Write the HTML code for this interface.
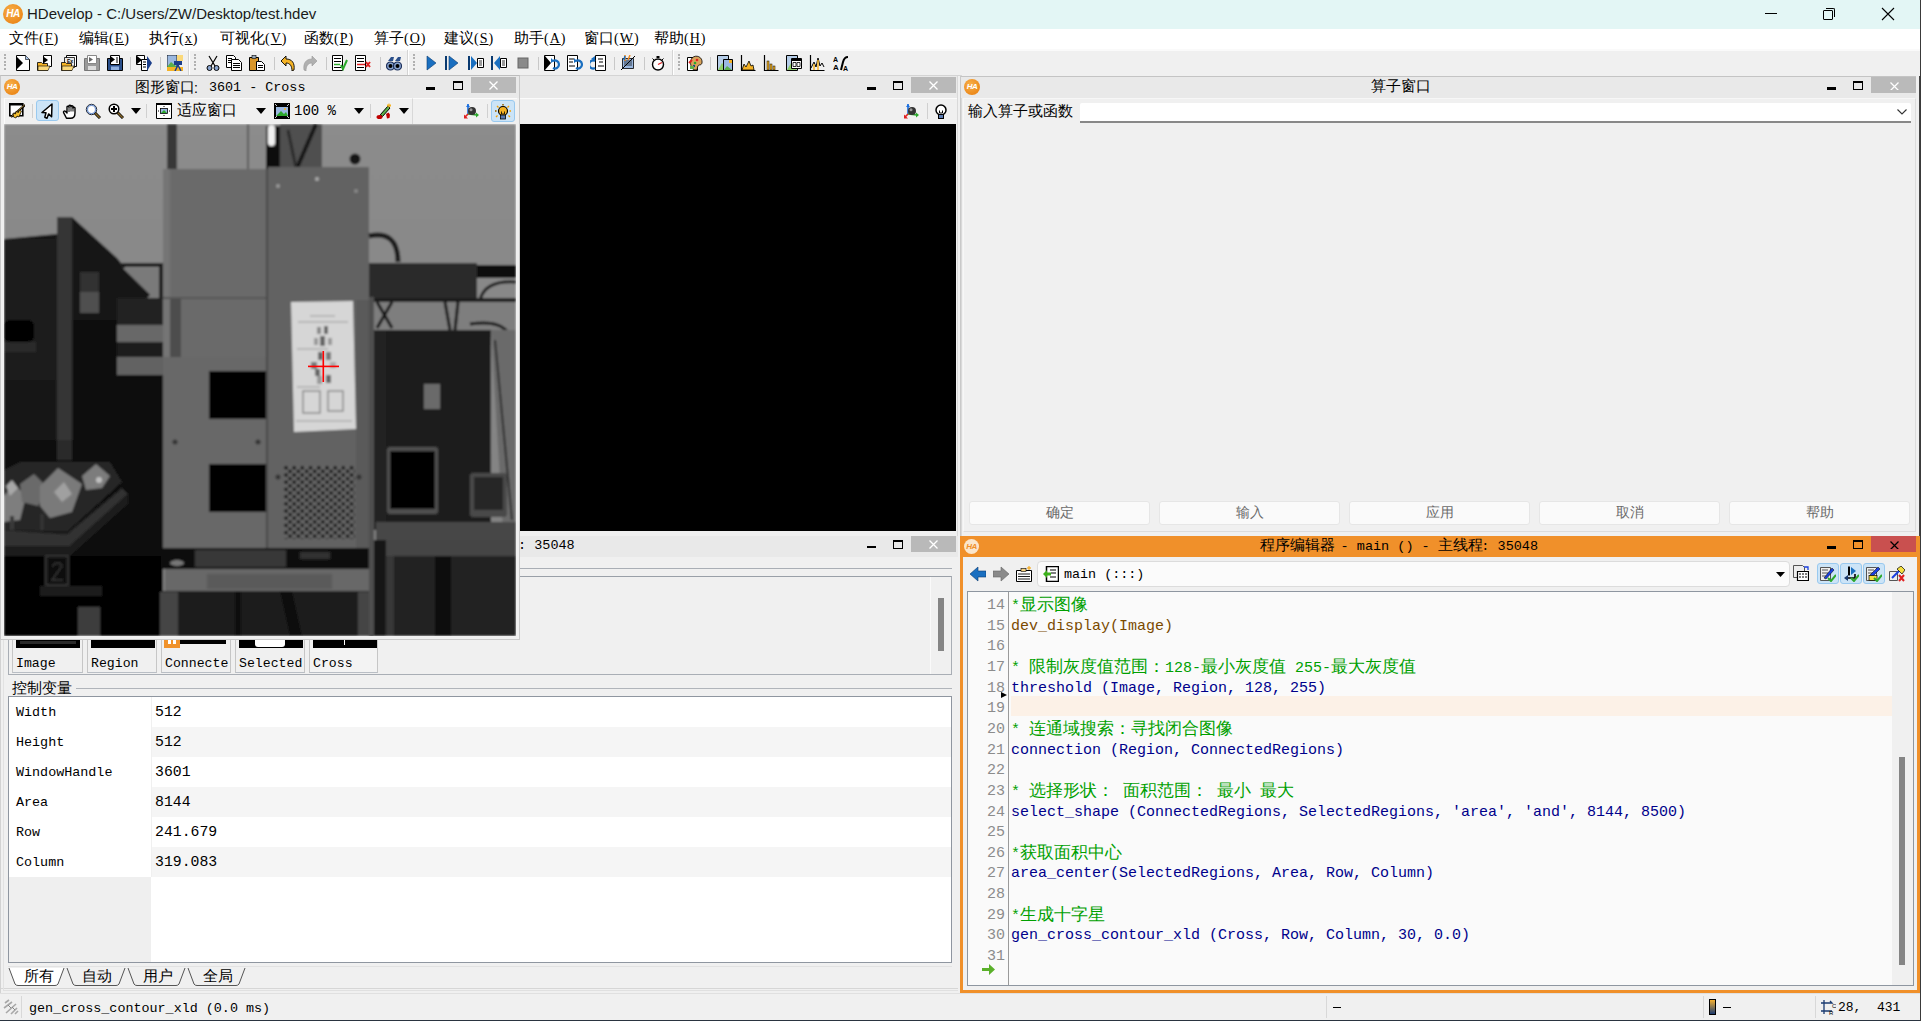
<!DOCTYPE html>
<html><head><meta charset="utf-8">
<style>
*{box-sizing:border-box;margin:0;padding:0}
html,body{width:1921px;height:1021px;overflow:hidden;background:#f0f0f0;font-family:"Liberation Sans",sans-serif;color:#000}
.a{position:absolute}
.mono{font-family:"Liberation Mono",monospace}
.ha{position:absolute;width:17px;height:17px;border-radius:50%;background:radial-gradient(circle at 40% 35%,#f7b04a,#ec8a1c 70%);color:#fff;font:italic bold 8px/17px "Liberation Sans",sans-serif;text-align:center;letter-spacing:-0.5px}
.tb{position:absolute;background:#e9e9e9}
.minb{position:absolute;width:11px;height:3px;background:#000}
.maxb{position:absolute;width:13px;height:11px;border:2px solid #000;border-top-width:3px}
.clsb{position:absolute;width:45px;height:16px;background:#b9b9b9;color:#fff;font:15px/16px "Liberation Sans",sans-serif;text-align:center}
.menu{top:29px;font-size:15px;line-height:18px;white-space:nowrap;color:#000}
.ln{left:968px;width:37px;text-align:right;font-size:15px;line-height:18px;color:#8c8c8c}
.code{left:1011px;font-size:15px;line-height:18px;white-space:pre}
.cj{font-size:17px;line-height:17px;display:inline-block;white-space:nowrap}
.mcj{display:inline-block;white-space:nowrap}
.acc{font-family:"Liberation Serif",serif;font-size:14px;letter-spacing:1px}
.acc u{text-underline-offset:1px}
.cjk{font-family:"Liberation Sans",sans-serif}
</style></head><body>

<!-- ===== Title bar ===== -->
<div class="a" style="left:0;top:0;width:1921px;height:29px;background:#e3f6f5"></div>
<div class="ha" style="left:3px;top:4px;width:20px;height:20px;line-height:20px;font-size:10px">HA</div>
<div class="a" style="left:27px;top:5px;font-size:15px;color:#1a1a1a;white-space:nowrap">HDevelop - C:/Users/ZW/Desktop/test.hdev</div>

<div class="a" style="left:1765px;top:13px;width:12px;height:1px;background:#000"></div>
<div class="a" style="left:1823px;top:10px;width:10px;height:10px;border:1px solid #000;border-radius:1px"></div>
<div class="a" style="left:1826px;top:8px;width:9px;height:9px;border-top:1px solid #000;border-right:1px solid #000;border-radius:0 2px 0 0"></div>
<svg class="a" style="left:1881px;top:7px" width="14" height="14" viewBox="0 0 14 14"><path d="M1 1l12 12M13 1L1 13" stroke="#000" stroke-width="1.1"/></svg>
<!-- ===== Menu bar ===== -->
<div class="a" style="left:0;top:29px;width:1921px;height:20px;background:#fff"></div>
<div class="a menu" style="left:9px"><span class="mcj" style="width:30px">文件</span><span class="acc">(<u>F</u>)</span></div>
<div class="a menu" style="left:79px"><span class="mcj" style="width:30px">编辑</span><span class="acc">(<u>E</u>)</span></div>
<div class="a menu" style="left:149px"><span class="mcj" style="width:30px">执行</span><span class="acc">(<u>x</u>)</span></div>
<div class="a menu" style="left:220px"><span class="mcj" style="width:45px">可视化</span><span class="acc">(<u>V</u>)</span></div>
<div class="a menu" style="left:304px"><span class="mcj" style="width:30px">函数</span><span class="acc">(<u>P</u>)</span></div>
<div class="a menu" style="left:374px"><span class="mcj" style="width:30px">算子</span><span class="acc">(<u>O</u>)</span></div>
<div class="a menu" style="left:444px"><span class="mcj" style="width:30px">建议</span><span class="acc">(<u>S</u>)</span></div>
<div class="a menu" style="left:514px"><span class="mcj" style="width:30px">助手</span><span class="acc">(<u>A</u>)</span></div>
<div class="a menu" style="left:584px"><span class="mcj" style="width:30px">窗口</span><span class="acc">(<u>W</u>)</span></div>
<div class="a menu" style="left:654px"><span class="mcj" style="width:30px">帮助</span><span class="acc">(<u>H</u>)</span></div>

<!-- ===== Toolbar ===== -->
<div class="a" style="left:0;top:49px;width:1921px;height:27px;background:#f0f0f0;border-top:2px solid #fafafa;border-bottom:1px solid #d4d4d4"></div>
<svg class="a" style="left:15px;top:55px" width="16" height="16" viewBox="0 0 16 16"><path d="M1.5 .5h9l4 4v11h-13z" fill="#fff" stroke="#000"/><path d="M10.5 .5v4h4" fill="#a9c4e8" stroke="#000" stroke-width=".6"/><path d="M2 2l6 6-6 6z" fill="#000"/></svg>
<svg class="a" style="left:37px;top:55px" width="16" height="16" viewBox="0 0 16 16"><path d="M6.5 .5h8v11h-8z" fill="#fff" stroke="#000"/><path d="M7 2l4 3-4 3z" fill="#000"/><path d="M.5 7.5h4l1 1h5v7h-10z" fill="#f5b325" stroke="#000" stroke-width=".8"/><path d="M1 11h12l-2 4.5h-10z" fill="#fbd97a" stroke="#000" stroke-width=".6"/></svg>
<svg class="a" style="left:61px;top:55px" width="16" height="16" viewBox="0 0 16 16"><path d="M5.5 .5h10v11h-10z" fill="#fff" stroke="#000"/><path d="M3.5 2.5h10v10h-10z" fill="#e8e8e8" stroke="#000" stroke-width=".8"/><text x="6" y="8" font-size="5" font-family="Liberation Sans" font-weight="bold">Ex</text><path d="M.5 7.5h4l1 1h5v7h-10z" fill="#f5b325" stroke="#000" stroke-width=".8"/><path d="M1 11h12l-2 4.5h-10z" fill="#fbd97a" stroke="#000" stroke-width=".6"/></svg>
<svg class="a" style="left:84px;top:55px" width="16" height="16" viewBox="0 0 16 16"><path d="M.5 3.5h15v12h-15z" fill="#9a9a9a" stroke="#777"/><path d="M3.5 .5h9v8h-9z" fill="#fff" stroke="#888"/><path d="M5 2l4 2.5-4 2.5z" fill="#666"/><rect x="4" y="11" width="8" height="4" fill="#ddd"/></svg>
<svg class="a" style="left:107px;top:55px" width="16" height="16" viewBox="0 0 16 16"><path d="M.5 3.5h15v12h-15z" fill="#2b4f8a" stroke="#000"/><path d="M3.5 .5h9v9h-9z" fill="#fff" stroke="#000"/><path d="M4 1.5l4 3-4 3z" fill="#000"/><path d="M10 2v6" stroke="#000"/><rect x="4" y="11.5" width="8" height="3.5" fill="#8fb0e0"/></svg>
<svg class="a" style="left:136px;top:55px" width="16" height="16" viewBox="0 0 16 16"><path d="M.5 .5h8v9h-8z" fill="#fff" stroke="#000"/><path d="M1 1l5 4-5 4z" fill="#000"/><path d="M5.5 4.5h6v11h-6z" fill="#fff" stroke="#000"/><path d="M7 7h3M7 9.5h3M7 12h3" stroke="#000"/><path d="M11 1l5 7-5 8z" fill="#1c3f8a"/></svg>
<svg class="a" style="left:167px;top:55px" width="16" height="16" viewBox="0 0 16 16"><rect x="0" y="0" width="10" height="12" fill="#9bb8e0" stroke="#000" stroke-width=".8"/><path d="M0 12l4-5 6 5z" fill="#5bb04a"/><rect x="0" y="12" width="16" height="4" fill="#f5b325"/><rect x="10" y="0" width="6" height="6" fill="#fbd97a"/><rect x="7" y="6" width="8" height="4" fill="#1c3f8a"/><path d="M11 10l-3 6M11 10l3 6" stroke="#1c3f8a" stroke-width="1.5"/></svg>
<svg class="a" style="left:205px;top:55px" width="16" height="16" viewBox="0 0 16 16"><path d="M4 1l6 10M12 1l-6 10" stroke="#000" stroke-width="1.2"/><circle cx="4.5" cy="13" r="2.5" fill="#8aa5d0" stroke="#000"/><circle cx="11.5" cy="13" r="2.5" fill="#8aa5d0" stroke="#000"/></svg>
<svg class="a" style="left:226px;top:55px" width="16" height="16" viewBox="0 0 16 16"><path d="M.5 .5h7l2 2v10h-9z" fill="#fff" stroke="#000"/><path d="M2 3.5h4M2 5.5h4M2 7.5h4" stroke="#000"/><path d="M5.5 4.5h7l3 3v8h-10z" fill="#fff" stroke="#000"/><path d="M7 8.5h7M7 10.5h7M7 12.5h7" stroke="#000"/></svg>
<svg class="a" style="left:249px;top:55px" width="16" height="16" viewBox="0 0 16 16"><path d="M.5 2.5h9v13h-9z" fill="#d9962a" stroke="#000"/><rect x="3" y="0.5" width="4" height="3" fill="#9ab" stroke="#000" stroke-width=".6"/><path d="M7.5 6.5h5l3 3v6h-8z" fill="#fff" stroke="#000"/><path d="M9 10.5h5M9 12.5h5" stroke="#000"/></svg>
<svg class="a" style="left:280px;top:55px" width="16" height="16" viewBox="0 0 16 16"><path d="M1 6l5-5v3c6 0 9 4 8 11l-2 1c0-5-2-8-6-8v3z" fill="#f5b325" stroke="#000" stroke-width=".9"/></svg>
<svg class="a" style="left:302px;top:55px" width="16" height="16" viewBox="0 0 16 16"><path d="M15 6l-5-5v3c-6 0-9 4-8 11l2 1c0-5 2-8 6-8v3z" fill="#b0b0b0" stroke="#999" stroke-width=".6"/></svg>
<svg class="a" style="left:332px;top:55px" width="16" height="16" viewBox="0 0 16 16"><path d="M.5 .5h10v15h-10z" fill="#fff" stroke="#000"/><path d="M2 3.5h7M2 6.5h7M2 12.5h7" stroke="#000"/><path d="M2 9.5h6" stroke="#2ca82c" stroke-width="1.5"/><path d="M9 10l2 4 4-9" stroke="#2ca82c" stroke-width="2" fill="none"/></svg>
<svg class="a" style="left:355px;top:55px" width="16" height="16" viewBox="0 0 16 16"><path d="M.5 .5h10v15h-10z" fill="#fff" stroke="#000"/><path d="M2 3.5h7M2 6.5h7M2 12.5h7" stroke="#000"/><path d="M2 9.5h8" stroke="#e02020" stroke-width="1.5"/><path d="M11 7l4 5M15 7l-4 5" stroke="#e02020" stroke-width="2"/></svg>
<svg class="a" style="left:386px;top:55px" width="16" height="16" viewBox="0 0 16 16"><path d="M2 6l3-4h3l-1 4M9 6l3-4h3l-1 4" fill="#2b4f8a"/><circle cx="4.5" cy="11" r="4" fill="#8aa5d0" stroke="#1c2f5a" stroke-width="1.2"/><circle cx="11.5" cy="11" r="4" fill="#8aa5d0" stroke="#1c2f5a" stroke-width="1.2"/><circle cx="4.5" cy="11" r="2" fill="#000"/><circle cx="11.5" cy="11" r="2" fill="#000"/></svg>
<svg class="a" style="left:424px;top:55px" width="16" height="16" viewBox="0 0 16 16"><path d="M3 1l9 7-9 7z" fill="#1a6fc0" stroke="#0a3a70" stroke-width=".6"/></svg>
<svg class="a" style="left:444px;top:55px" width="16" height="16" viewBox="0 0 16 16"><rect x="1" y="1" width="2" height="14" fill="#0a3a70"/><path d="M5 1l9 7-9 7z" fill="#1a6fc0" stroke="#0a3a70" stroke-width=".6"/></svg>
<svg class="a" style="left:468px;top:55px" width="16" height="16" viewBox="0 0 16 16"><rect x="0" y="1" width="2" height="14" fill="#0a3a70"/><path d="M3 1l6 7-6 7z" fill="#1a6fc0"/><path d="M9.5 3.5h6v9h-6z" fill="#fff" stroke="#000"/><path d="M11 6h3M11 8h3M11 10h3" stroke="#000" stroke-width=".8"/></svg>
<svg class="a" style="left:491px;top:55px" width="16" height="16" viewBox="0 0 16 16"><rect x="0" y="1" width="2" height="14" fill="#0a3a70"/><path d="M9 1l-6 7 6 7z" fill="#1a6fc0"/><path d="M9.5 3.5h6v9h-6z" fill="#fff" stroke="#000"/><path d="M11 6h3M11 8h3M11 10h3" stroke="#000" stroke-width=".8"/></svg>
<svg class="a" style="left:515px;top:55px" width="16" height="16" viewBox="0 0 16 16"><rect x="3" y="3" width="10" height="10" fill="#8a8a8a" stroke="#666"/></svg>
<svg class="a" style="left:544px;top:55px" width="16" height="16" viewBox="0 0 16 16"><path d="M.5 .5h10v15h-10z" fill="#fff" stroke="#000"/><path d="M1 1l6 7-6 7z" fill="#000"/><path d="M9 6a4 4 0 1 1 0 7" stroke="#1a6fc0" stroke-width="2.2" fill="none"/><path d="M7 3l3 3-3 2z" fill="#1a6fc0"/></svg>
<svg class="a" style="left:567px;top:55px" width="16" height="16" viewBox="0 0 16 16"><path d="M.5 .5h10v15h-10z" fill="#fff" stroke="#000"/><path d="M2 4h5M2 7h4M2 11h6" stroke="#000"/><path d="M9 6a4 4 0 1 1 0 7" stroke="#1a6fc0" stroke-width="2.2" fill="none"/><path d="M7 3l3 3-3 2z" fill="#1a6fc0"/></svg>
<svg class="a" style="left:590px;top:55px" width="16" height="16" viewBox="0 0 16 16"><path d="M5.5 .5h10v15h-10z" fill="#fff" stroke="#000"/><path d="M8 4h5M9 7h4M8 11h6" stroke="#000"/><path d="M5 6a4 4 0 1 0 0 7" stroke="#1a6fc0" stroke-width="2.2" fill="none"/><path d="M1 4l4-3v5z" fill="#1a6fc0"/></svg>
<svg class="a" style="left:620px;top:55px" width="16" height="16" viewBox="0 0 16 16"><path d="M2.5 3.5h11v10h-11z" fill="#9bb8e0" stroke="#000" stroke-width=".8"/><path d="M4 6h8M4 8h8M4 10h8" stroke="#000" stroke-width=".7"/><path d="M1 15l14-14" stroke="#000"/><path d="M5 0v6M10 0l-2 5" stroke="#f08a20" stroke-width="1.5"/><path d="M5 1l-1 4" stroke="#1a6fc0" stroke-width="1.5"/></svg>
<svg class="a" style="left:650px;top:55px" width="16" height="16" viewBox="0 0 16 16"><circle cx="8" cy="9.5" r="5.5" fill="#fff" stroke="#000" stroke-width="1.4"/><rect x="6.5" y="1" width="3" height="2" fill="#000"/><path d="M8 9.5l4-2" stroke="#e02020" stroke-width="1.3"/><path d="M2.5 3.5l2 2M13.5 3.5l-2 2" stroke="#000"/></svg>
<svg class="a" style="left:687px;top:55px" width="16" height="16" viewBox="0 0 16 16"><path d="M.5 2.5h10v13h-10z" fill="#fff" stroke="#000"/><path d="M5 3c4-4 11-1 10 5-1 3-3 1-4 3s0 4-3 4c-4 0-6-8-3-12z" fill="#d9a35a" stroke="#000" stroke-width=".8"/><circle cx="10" cy="5" r="1.3" fill="#e02020"/><circle cx="8" cy="8" r="1.3" fill="#2ca82c"/><circle cx="7" cy="11" r="1.2" fill="#1c3f8a"/><path d="M2 8l3-3" stroke="#e02020" stroke-width="2"/><rect x="3" y="11" width="4" height="3" fill="#5bb04a"/></svg>
<svg class="a" style="left:717px;top:55px" width="16" height="16" viewBox="0 0 16 16"><path d="M.5 .5h11v15h-11z" fill="#b5cde8" stroke="#000"/><path d="M1 15l4-7 6 7z" fill="#8fcf6a"/><path d="M6.5 4.5h9v11h-9z" fill="#9bb8e0" stroke="#000"/><rect x="12" y="5" width="3" height="3" fill="#f5b325"/><path d="M7 15l3-4 5 4z" fill="#5bb04a"/></svg>
<svg class="a" style="left:740px;top:55px" width="16" height="16" viewBox="0 0 16 16"><path d="M1.5 0v15.5h14" stroke="#000" stroke-width="1.2" fill="none"/><path d="M2 15l2-6 2 3 3-6 2 5 2-1 1 5z" fill="#f5b325" stroke="#000" stroke-width=".8"/></svg>
<svg class="a" style="left:763px;top:55px" width="16" height="16" viewBox="0 0 16 16"><path d="M1.5 0v15.5h14" stroke="#000" stroke-width="1.2" fill="none"/><rect x="4" y="6" width="2" height="9" fill="#f5b325" stroke="#000" stroke-width=".5"/><rect x="7" y="9" width="2" height="6" fill="#f5b325" stroke="#000" stroke-width=".5"/><rect x="10" y="11" width="2" height="4" fill="#f5b325" stroke="#000" stroke-width=".5"/></svg>
<svg class="a" style="left:786px;top:55px" width="16" height="16" viewBox="0 0 16 16"><path d="M.5 .5h11v15h-11z" fill="#b5cde8" stroke="#000"/><path d="M1 15l4-7 6 7z" fill="#8fcf6a"/><path d="M5.5 3.5h10v10h-10z" fill="#fff" stroke="#000"/><rect x="6" y="4" width="9" height="2" fill="#000"/><path d="M7 7.5h3v4h-3zM11 7.5h3v4h-3z" fill="none" stroke="#000" stroke-width=".8"/></svg>
<svg class="a" style="left:809px;top:55px" width="16" height="16" viewBox="0 0 16 16"><path d="M1.5 0v15.5h14" stroke="#000" stroke-width="1.2" fill="none"/><path d="M2 13l3-6 2 5 2-9 2 8 2-3 2 4" stroke="#000" stroke-width="1" fill="none"/><path d="M5 9v6M9 5v10" stroke="#f5b325" stroke-width="1.5"/></svg>
<svg class="a" style="left:833px;top:55px" width="16" height="16" viewBox="0 0 16 16"><text x="0" y="7" font-size="7" font-weight="bold" font-family="Liberation Sans">A</text><text x="0" y="15" font-size="8" font-weight="bold" font-family="Liberation Sans">A</text><path d="M8 15l2-8c1-4 3-5 5-5" stroke="#000" stroke-width="2" fill="none"/><text x="10" y="15.5" font-size="7" font-weight="bold" font-family="Liberation Sans">A</text></svg>
<div class="a" style="left:130px;top:57px;width:1px;height:13px;background:#c8c8c8"></div>
<div class="a" style="left:160px;top:57px;width:1px;height:13px;background:#c8c8c8"></div>
<div class="a" style="left:274px;top:57px;width:1px;height:13px;background:#c8c8c8"></div>
<div class="a" style="left:326px;top:57px;width:1px;height:13px;background:#c8c8c8"></div>
<div class="a" style="left:380px;top:57px;width:1px;height:13px;background:#c8c8c8"></div>
<div class="a" style="left:538px;top:57px;width:1px;height:13px;background:#c8c8c8"></div>
<div class="a" style="left:614px;top:57px;width:1px;height:13px;background:#c8c8c8"></div>
<div class="a" style="left:644px;top:57px;width:1px;height:13px;background:#c8c8c8"></div>
<div class="a" style="left:710px;top:57px;width:1px;height:13px;background:#c8c8c8"></div>
<div class="a" style="left:188px;top:50px;width:1px;height:25px;background:#d4d4d4"></div><div class="a" style="left:189px;top:50px;width:1px;height:25px;background:#fff"></div>
<div class="a" style="left:407px;top:50px;width:1px;height:25px;background:#d4d4d4"></div><div class="a" style="left:408px;top:50px;width:1px;height:25px;background:#fff"></div>
<div class="a" style="left:672px;top:50px;width:1px;height:25px;background:#d4d4d4"></div><div class="a" style="left:673px;top:50px;width:1px;height:25px;background:#fff"></div>
<div class="a" style="left:4px;top:54.0px;width:2px;height:2px;background:#b0b0b0"></div><div class="a" style="left:4px;top:57.4px;width:2px;height:2px;background:#b0b0b0"></div><div class="a" style="left:4px;top:60.8px;width:2px;height:2px;background:#b0b0b0"></div><div class="a" style="left:4px;top:64.2px;width:2px;height:2px;background:#b0b0b0"></div><div class="a" style="left:4px;top:67.6px;width:2px;height:2px;background:#b0b0b0"></div>
<div class="a" style="left:194px;top:54.0px;width:2px;height:2px;background:#b0b0b0"></div><div class="a" style="left:194px;top:57.4px;width:2px;height:2px;background:#b0b0b0"></div><div class="a" style="left:194px;top:60.8px;width:2px;height:2px;background:#b0b0b0"></div><div class="a" style="left:194px;top:64.2px;width:2px;height:2px;background:#b0b0b0"></div><div class="a" style="left:194px;top:67.6px;width:2px;height:2px;background:#b0b0b0"></div>
<div class="a" style="left:413px;top:54.0px;width:2px;height:2px;background:#b0b0b0"></div><div class="a" style="left:413px;top:57.4px;width:2px;height:2px;background:#b0b0b0"></div><div class="a" style="left:413px;top:60.8px;width:2px;height:2px;background:#b0b0b0"></div><div class="a" style="left:413px;top:64.2px;width:2px;height:2px;background:#b0b0b0"></div><div class="a" style="left:413px;top:67.6px;width:2px;height:2px;background:#b0b0b0"></div>
<div class="a" style="left:678px;top:54.0px;width:2px;height:2px;background:#b0b0b0"></div><div class="a" style="left:678px;top:57.4px;width:2px;height:2px;background:#b0b0b0"></div><div class="a" style="left:678px;top:60.8px;width:2px;height:2px;background:#b0b0b0"></div><div class="a" style="left:678px;top:64.2px;width:2px;height:2px;background:#b0b0b0"></div><div class="a" style="left:678px;top:67.6px;width:2px;height:2px;background:#b0b0b0"></div>


<!-- ===== Back graphics window ===== -->
<div class="a" style="left:0;top:76px;width:958px;height:460px;background:#f0f0f0"></div>
<div class="tb" style="left:0;top:76px;width:958px;height:22px"></div>
<div class="a" style="left:520px;top:124px;width:436px;height:407px;background:#000"></div>

<!-- ===== Variable window ===== -->
<div class="a" style="left:0;top:536px;width:958px;height:456px;background:#f0f0f0"></div>
<div class="tb" style="left:0;top:536px;width:958px;height:21px"></div>
<div class="a mono" style="left:518px;top:538px;font-size:13.5px;line-height:16px;white-space:pre">: 35048</div>
<div class="minb" style="left:867px;top:546px;width:9px;height:2px"></div>
<div class="a" style="left:893px;top:540px;width:10px;height:9px;border:1px solid #000;border-top-width:2.5px"></div>
<div class="a" style="left:911px;top:536px;width:45px;height:16px;background:#b9b9b9"></div>
<svg class="a" style="left:929px;top:540px" width="9" height="9" viewBox="0 0 9 9"><path d="M.5 .5l8 8M8.5 .5l-8 8" stroke="#fff" stroke-width="1.3"/></svg>
<div class="a" style="left:8px;top:568px;width:944px;height:1px;background:#a9aeb5"></div>
<div class="a" style="left:8px;top:576px;width:944px;height:99px;border:1px solid #a9aeb5;border-top-color:#9aa0a8;background:#f0f0f0"></div>
<div class="a" style="left:930px;top:577px;width:21px;height:97px;background:#f0f0f0;border-left:1px solid #fafafa"></div>
<div class="a" style="left:938px;top:598px;width:6px;height:53px;background:#858585"></div>
<div class="a" style="left:12px;top:600px;width:71px;height:73px;border-left:1px solid #c6c6c6;border-right:1px solid #c6c6c6;border-bottom:1px solid #b9bec5;background:#f0f0f0"></div>
<div class="a" style="left:16px;top:640px;width:64px;height:8px;background:#000"></div>
<div class="a mono" style="left:16px;top:656px;font-size:13.2px;line-height:16px;white-space:pre;overflow:hidden;width:67px">Image</div>
<div class="a" style="left:87px;top:600px;width:70px;height:73px;border-left:1px solid #c6c6c6;border-right:1px solid #c6c6c6;border-bottom:1px solid #b9bec5;background:#f0f0f0"></div>
<div class="a" style="left:91px;top:640px;width:64px;height:8px;background:#000"></div>
<div class="a mono" style="left:91px;top:656px;font-size:13.2px;line-height:16px;white-space:pre;overflow:hidden;width:66px">Region</div>
<div class="a" style="left:161px;top:600px;width:70px;height:73px;border-left:1px solid #c6c6c6;border-right:1px solid #c6c6c6;border-bottom:1px solid #b9bec5;background:#f0f0f0"></div>
<div class="a" style="left:180px;top:640px;width:46px;height:4px;background:#000"></div>
<div class="a mono" style="left:165px;top:656px;font-size:13.2px;line-height:16px;white-space:pre;overflow:hidden;width:66px">Connecte</div>
<div class="a" style="left:235px;top:600px;width:70px;height:73px;border-left:1px solid #c6c6c6;border-right:1px solid #c6c6c6;border-bottom:1px solid #b9bec5;background:#f0f0f0"></div>
<div class="a" style="left:239px;top:640px;width:64px;height:8px;background:#000"></div>
<div class="a mono" style="left:239px;top:656px;font-size:13.2px;line-height:16px;white-space:pre;overflow:hidden;width:66px">Selected</div>
<div class="a" style="left:309px;top:600px;width:69px;height:73px;border-left:1px solid #c6c6c6;border-right:1px solid #c6c6c6;border-bottom:1px solid #b9bec5;background:#f3f3f3"></div>
<div class="a" style="left:313px;top:640px;width:64px;height:8px;background:#000"></div>
<div class="a mono" style="left:313px;top:656px;font-size:13.2px;line-height:16px;white-space:pre;overflow:hidden;width:65px">Cross</div>
<div class="a" style="left:164px;top:636px;width:16px;height:12px;background:#f0922b"></div>
<div class="a" style="left:168px;top:640px;width:8px;height:4px;background:#fff"></div>
<div class="a" style="left:171px;top:640px;width:2px;height:4px;background:#f0922b"></div>
<div class="a" style="left:255px;top:640px;width:30px;height:7px;background:#fff;border-radius:0 0 3px 3px"></div>
<div class="a" style="left:20px;top:641px;width:56px;height:3px;background:#2a2a2a"></div>
<div class="a" style="left:344px;top:640px;width:1px;height:5px;background:#fff"></div>
<div class="a" style="left:12px;top:679px;font-size:14.5px;line-height:18px;white-space:nowrap">控制变量</div>
<div class="a" style="left:76px;top:688px;width:876px;height:1px;background:#b0b4ba"></div>
<div class="a" style="left:8px;top:696px;width:944px;height:267px;border:1px solid #8f96a0;background:#fff"></div>
<div class="a" style="left:9px;top:877px;width:142px;height:85px;background:#efefef"></div>
<div class="a mono" style="left:16px;top:705px;font-size:13.4px;line-height:16px;white-space:pre">Width</div>
<div class="a mono" style="left:155px;top:704px;font-size:14.8px;line-height:17px;white-space:pre">512</div>
<div class="a" style="left:151px;top:727px;width:800px;height:30px;background:#f5f5f5"></div>
<div class="a mono" style="left:16px;top:735px;font-size:13.4px;line-height:16px;white-space:pre">Height</div>
<div class="a mono" style="left:155px;top:734px;font-size:14.8px;line-height:17px;white-space:pre">512</div>
<div class="a mono" style="left:16px;top:765px;font-size:13.4px;line-height:16px;white-space:pre">WindowHandle</div>
<div class="a mono" style="left:155px;top:764px;font-size:14.8px;line-height:17px;white-space:pre">3601</div>
<div class="a" style="left:151px;top:787px;width:800px;height:30px;background:#f5f5f5"></div>
<div class="a mono" style="left:16px;top:795px;font-size:13.4px;line-height:16px;white-space:pre">Area</div>
<div class="a mono" style="left:155px;top:794px;font-size:14.8px;line-height:17px;white-space:pre">8144</div>
<div class="a mono" style="left:16px;top:825px;font-size:13.4px;line-height:16px;white-space:pre">Row</div>
<div class="a mono" style="left:155px;top:824px;font-size:14.8px;line-height:17px;white-space:pre">241.679</div>
<div class="a" style="left:151px;top:847px;width:800px;height:30px;background:#f5f5f5"></div>
<div class="a mono" style="left:16px;top:855px;font-size:13.4px;line-height:16px;white-space:pre">Column</div>
<div class="a mono" style="left:155px;top:854px;font-size:14.8px;line-height:17px;white-space:pre">319.083</div>
<div class="a" style="left:151px;top:697px;width:1px;height:180px;background:#f0f0f0"></div>
<div class="a" style="left:8px;top:963px;width:944px;height:4px;background:#f0f0f0;border-bottom:1px solid #e2e2e2"></div>
<svg class="a" style="left:8px;top:967px" width="58" height="20" viewBox="0 0 58 20"><path d="M1 1 L7 17 Q8 18.5 10 18.5 H47 Q49 18.5 50 17 L56 1" fill="#fff" stroke="#555" stroke-width="1"/></svg>
<div class="a" style="left:24px;top:967px;font-size:14.5px;line-height:18px;white-space:nowrap">所有</div>
<svg class="a" style="left:66px;top:967px" width="61" height="20" viewBox="0 0 61 20"><path d="M1 1 L7 17 Q8 18.5 10 18.5 H50 Q52 18.5 53 17 L59 1" fill="none" stroke="#555" stroke-width="1"/></svg>
<div class="a" style="left:82px;top:967px;font-size:14.5px;line-height:18px;white-space:nowrap">自动</div>
<svg class="a" style="left:127px;top:967px" width="60" height="20" viewBox="0 0 60 20"><path d="M1 1 L7 17 Q8 18.5 10 18.5 H49 Q51 18.5 52 17 L58 1" fill="none" stroke="#555" stroke-width="1"/></svg>
<div class="a" style="left:143px;top:967px;font-size:14.5px;line-height:18px;white-space:nowrap">用户</div>
<svg class="a" style="left:187px;top:967px" width="60" height="20" viewBox="0 0 60 20"><path d="M1 1 L7 17 Q8 18.5 10 18.5 H49 Q51 18.5 52 17 L58 1" fill="none" stroke="#555" stroke-width="1"/></svg>
<div class="a" style="left:203px;top:967px;font-size:14.5px;line-height:18px;white-space:nowrap">全局</div>
<div class="a" style="left:0px;top:988px;width:958px;height:1px;background:#d6d6d6"></div>

<div class="a" style="left:0;top:536px;width:1px;height:457px;background:#d2d2d2"></div>
<div class="a" style="left:3px;top:557px;width:1px;height:433px;background:#e2e2e2"></div>
<div class="a" style="left:3px;top:990px;width:955px;height:1px;background:#e0e0e0"></div>

<div class="a" style="left:0px;top:76px;width:1px;height:460px;background:#d0d0d0"></div>
<div class="a" style="left:867px;top:87px;width:9px;height:3px;background:#000"></div>
<div class="a" style="left:893px;top:81px;width:10px;height:9px;border:1px solid #000;border-top-width:2.5px"></div>
<div class="a" style="left:911px;top:77px;width:45px;height:16px;background:#b9b9b9"></div>
<svg class="a" style="left:929px;top:81px" width="9" height="9" viewBox="0 0 9 9"><path d="M.5 .5l8 8M8.5 .5l-8 8" stroke="#fff" stroke-width="1.3"/></svg>
<div class="a" style="left:520px;top:98px;width:437px;height:26px;background:#f0f0f0;border-top:1px solid #fbfbfb"></div>
<svg class="a" style="left:903px;top:103px" width="16" height="16" viewBox="0 0 16 16"><path d="M5 1v10" stroke="#1a6fe0" stroke-width="1.6"/><path d="M3 4l2-3 2 3z" fill="#1a6fe0"/><path d="M5 11l9 1" stroke="#2ca82c" stroke-width="1.6"/><path d="M13 9.5l3 2.5-3 2.5z" fill="#2ca82c"/><path d="M5 11l-3 3" stroke="#e02020" stroke-width="1.6"/><path d="M1 11.5v4h4z" fill="#e02020"/><circle cx="9" cy="8" r="4" fill="#333"/><circle cx="8" cy="6.8" r="1.5" fill="#999"/></svg>
<div class="a" style="left:927px;top:103px;width:1px;height:16px;background:#d0d0d0"></div>
<svg class="a" style="left:933px;top:103px" width="16" height="16" viewBox="0 0 16 16"><circle cx="8" cy="7" r="5" fill="#fff" stroke="#000" stroke-width="1.5"/><path d="M6.5 7.5v2.5h3v-2.5" stroke="#000" fill="none" stroke-width="1"/><rect x="5.5" y="11.5" width="5" height="4" fill="#5a7ab0" stroke="#000" stroke-width="1"/></svg>
<div class="a" style="left:957px;top:76px;width:4px;height:460px;background:#f0f0f0;border-left:1px solid #d9d9d9;border-right:1px solid #c9c9c9"></div>
<div class="a" style="left:0;top:75px;width:520px;height:565px;border:1px solid #c9c9c9;border-top-color:#bdbdbd;background:#f0f0f0"></div>
<div class="a" style="left:1px;top:76px;width:518px;height:22px;background:#e9e9e9"></div>
<div class="ha" style="left:4px;top:79px;width:16px;height:16px;line-height:16px;font-size:8px">HA</div>
<div class="a" style="left:135px;top:79px;font-size:14.5px;line-height:16px;white-space:nowrap">图形窗口</div>
<div class="a" style="left:194px;top:80px;font-size:14px;line-height:16px">:</div>
<div class="a mono" style="left:209px;top:80px;font-size:13.4px;line-height:16px;white-space:pre">3601 - Cross</div>
<div class="a" style="left:426px;top:87px;width:9px;height:3px;background:#000"></div>
<div class="a" style="left:453px;top:81px;width:10px;height:9px;border:1px solid #000;border-top-width:2.5px"></div>
<div class="a" style="left:471px;top:77px;width:45px;height:16px;background:#b9b9b9"></div>
<svg class="a" style="left:489px;top:81px" width="9" height="9" viewBox="0 0 9 9"><path d="M.5 .5l8 8M8.5 .5l-8 8" stroke="#fff" stroke-width="1.3"/></svg>
<div class="a" style="left:4px;top:98px;width:409px;height:26px;background:#f0f0f0;border-top:1px solid #fbfbfb;border-left:1px solid #fbfbfb;border-right:1px solid #d8d8d8"></div>
<div class="a" style="left:413px;top:98px;width:104px;height:26px;background:#f0f0f0;border-top:1px solid #fbfbfb"></div>
<svg class="a" style="left:9px;top:103px" width="16" height="16" viewBox="0 0 16 16"><path d="M.8 .8h13v12h-13z" fill="#fff" stroke="#000" stroke-width="1.6"/><rect x="0" y="0" width="14" height="2.5" fill="#000"/><path d="M2 14l14-12" stroke="#000" stroke-width="2.2"/><path d="M2.5 13.5l13-11.5" stroke="#a07a30" stroke-width="1"/><path d="M4 10l2.5 1 .5-2.5 2.5 1 .5-2.5 2.5 1-2.5 6-2-1-1 2-2.5-1z" fill="#f5c030" stroke="#000" stroke-width=".7"/></svg>
<div class="a" style="left:32px;top:104px;width:1px;height:14px;background:#d0d0d0"></div>
<div class="a" style="left:36px;top:100px;width:23px;height:21px;background:#cce4f7;border:1px solid #99c9ef;border-radius:3px"></div>
<svg class="a" style="left:40px;top:103px" width="16" height="16" viewBox="0 0 16 16"><path d="M12 1L2 9.5l4 .3-1.2 4.5 2.2 1 1.6-4.4 3 2.8z" fill="#fff" stroke="#000" stroke-width="1.5" stroke-linejoin="round"/></svg>
<svg class="a" style="left:62px;top:103px" width="16" height="16" viewBox="0 0 16 16"><path d="M4.5 15.3L1.6 9.6C1 8.5 2.4 7.5 3.3 8.3L5 10V4C5 2.8 7 2.8 7 4V3C7 1.8 9 1.8 9 3V3.5C9 2.3 11 2.3 11 3.5V5C11 3.8 13 3.8 13 5V10C13 13.5 11 15.3 8.5 15.3Z" fill="#fff" stroke="#000" stroke-width="1.4" stroke-linejoin="round"/><path d="M7 4v5M9 3v5.5M11 3.5v5" stroke="#000" stroke-width="1"/></svg>
<svg class="a" style="left:85px;top:103px" width="16" height="16" viewBox="0 0 16 16"><circle cx="6.5" cy="6.5" r="5.2" fill="#fff" stroke="#000" stroke-width="1"/><circle cx="6.5" cy="6.5" r="4.2" fill="none" stroke="#7a9ad0" stroke-width="1.6"/><path d="M10 10l5 5" stroke="#000" stroke-width="3"/><path d="M10.3 10.3l4.4 4.4" stroke="#8a6a2a" stroke-width="1.6"/></svg>
<svg class="a" style="left:108px;top:103px" width="16" height="16" viewBox="0 0 16 16"><circle cx="6" cy="6" r="4.8" fill="#fff" stroke="#000" stroke-width="1.5"/><path d="M6 3v6M3 6h6" stroke="#000" stroke-width="2"/><path d="M9.5 9.5l5.5 5.5" stroke="#000" stroke-width="3"/><path d="M9.8 9.8l4.9 4.9" stroke="#8a6a2a" stroke-width="1.5"/></svg>
<svg class="a" style="left:131px;top:108px" width="10" height="6" viewBox="0 0 10 6"><path d="M0 0h10l-5 6z" fill="#000"/></svg>
<div class="a" style="left:146px;top:104px;width:1px;height:14px;background:#d0d0d0"></div>
<svg class="a" style="left:156px;top:103px" width="16" height="16" viewBox="0 0 16 16"><path d="M.5 .5h15v15h-15z" fill="#fff" stroke="#000"/><rect x="0" y="0" width="16" height="2" fill="#000"/><rect x="4.5" y="5.5" width="7" height="5" fill="#9bb8e0" stroke="#000" stroke-width=".8"/><path d="M5 10l3-3 3 3z" fill="#2ca82c"/><path d="M8 3v1M8 12v1M2 8h1M13 8h1" stroke="#000"/></svg>
<div class="a" style="left:177px;top:102px;font-size:14.5px;line-height:17px;white-space:nowrap">适应窗口</div>
<svg class="a" style="left:256px;top:108px" width="10" height="6" viewBox="0 0 10 6"><path d="M0 0h10l-5 6z" fill="#000"/></svg>
<svg class="a" style="left:274px;top:103px" width="16" height="16" viewBox="0 0 16 16"><rect x="0" y="0" width="16" height="16" fill="#000"/><rect x="2" y="4" width="12" height="9" fill="#9bb8e0"/><path d="M2 13l5-5 3 3 2-2 2 4z" fill="#2ca82c"/><circle cx="11" cy="6" r="1" fill="#f5b325"/><path d="M1 1l2 2M15 1l-2 2M1 15l2-2M15 15l-2-2" stroke="#fff" stroke-width=".8"/></svg>
<div class="a mono" style="left:294px;top:103px;font-size:14px;line-height:16px;white-space:pre">100 %</div>
<svg class="a" style="left:354px;top:108px" width="10" height="6" viewBox="0 0 10 6"><path d="M0 0h10l-5 6z" fill="#000"/></svg>
<div class="a" style="left:370px;top:104px;width:1px;height:14px;background:#d0d0d0"></div>
<svg class="a" style="left:376px;top:103px" width="16" height="16" viewBox="0 0 16 16"><path d="M4.5 11.5L12 3l2 2-7.5 8.5z" fill="#5bb04a" stroke="#000" stroke-width="1"/><path d="M4.5 11.5l-1 2.5 2.5-1z" fill="#d9a060" stroke="#000" stroke-width=".8"/><ellipse cx="3.5" cy="14" rx="3" ry="2" fill="#c00000"/><path d="M10 11l2.5-1.5 1.5 2-.5 3.5-2.5.5z" fill="#c00000"/><path d="M13 .5v4M11 2.5h4M11.5 1l3 3M14.5 1l-3 3" stroke="#f5b325" stroke-width="1"/></svg>
<svg class="a" style="left:399px;top:108px" width="10" height="6" viewBox="0 0 10 6"><path d="M0 0h10l-5 6z" fill="#000"/></svg>
<svg class="a" style="left:463px;top:103px" width="16" height="16" viewBox="0 0 16 16"><path d="M5 1v10" stroke="#1a6fe0" stroke-width="1.6"/><path d="M3 4l2-3 2 3z" fill="#1a6fe0"/><path d="M5 11l9 1" stroke="#2ca82c" stroke-width="1.6"/><path d="M13 9.5l3 2.5-3 2.5z" fill="#2ca82c"/><path d="M5 11l-3 3" stroke="#e02020" stroke-width="1.6"/><path d="M1 11.5v4h4z" fill="#e02020"/><circle cx="9" cy="8" r="4" fill="#333"/><circle cx="8" cy="6.8" r="1.5" fill="#999"/></svg>
<div class="a" style="left:487px;top:104px;width:1px;height:14px;background:#d0d0d0"></div>
<div class="a" style="left:491px;top:100px;width:24px;height:22px;background:#cce4f7;border:1px solid #99c9ef;border-radius:3px"></div>
<svg class="a" style="left:495px;top:104px" width="16" height="16" viewBox="0 0 16 16"><circle cx="8" cy="7" r="4.5" fill="#f5b325" stroke="#000" stroke-width="1.2"/><path d="M6.5 7.5v2.5h3v-2.5" stroke="#000" fill="none" stroke-width=".8"/><rect x="5.5" y="11" width="5" height="4" fill="#5a7ab0" stroke="#000" stroke-width=".8"/><path d="M8 0v1.5M2 2l1.5 1.5M14 2l-1.5 1.5M0 7h1.5M14.5 7h1.5M1 13l1.5-1.5M15 13l-1.5-1.5" stroke="#f5a000" stroke-width="1.3"/><path d="M8 0v1.5M0 7h1.5" stroke="#000" stroke-width=".6"/></svg>

<svg class="a" style="left:4px;top:124px" width="512" height="512" viewBox="4 124 512 512">
<defs>
<linearGradient id="wall" x1="0" y1="0" x2="0" y2="1"><stop offset="0" stop-color="#8c8c8c"/><stop offset="1" stop-color="#808080"/></linearGradient>
<pattern id="grill" width="8.2" height="7.2" patternUnits="userSpaceOnUse" x="284" y="466"><rect width="8.2" height="7.2" fill="#666"/><circle cx="2" cy="1.8" r="1.8" fill="#050505"/><circle cx="6.1" cy="5.4" r="1.8" fill="#050505"/></pattern>
<filter id="bl"><feGaussianBlur stdDeviation="0.8"/></filter>
</defs>
<g filter="url(#bl)">
<rect x="4" y="124" width="512" height="512" fill="url(#wall)"/>
<!-- left dark machine -->
<polygon points="4,239 57,234 57,217 72,217 117,258 145,292 163,296 163,636 4,636" fill="#181818"/>
<rect x="57" y="217" width="15" height="223" fill="#363636"/>
<rect x="4" y="239" width="53" height="230" fill="#1e1e1e"/>
<rect x="4" y="320" width="30" height="22" fill="#050505" rx="6"/>
<rect x="4" y="342" width="32" height="10" fill="#2a2a2a"/>
<rect x="80" y="272" width="19" height="20" fill="#333"/>
<rect x="80" y="292" width="19" height="21" fill="#505050"/>
<rect x="72" y="320" width="45" height="150" fill="#0a0a0a"/>
<polygon points="117,268 160,268 160,298 145,298" fill="#7a7a7a"/>
<path d="M117,265 H161 V298" stroke="#1e1e1e" stroke-width="4" fill="none"/>
<path d="M100,250 L148,297" stroke="#141414" stroke-width="6"/>
<rect x="117" y="298" width="46" height="27" fill="#202020"/>
<rect x="117" y="325" width="46" height="17" fill="#686868"/>
<rect x="117" y="342" width="46" height="15" fill="#1e1e1e"/>
<rect x="117" y="357" width="46" height="18" fill="#626262"/>
<rect x="117" y="375" width="46" height="95" fill="#080808"/>
<rect x="4" y="380" width="53" height="88" fill="#141414"/>
<!-- metal parts -->
<rect x="4" y="440" width="159" height="120" fill="#080808"/>
<rect x="57" y="440" width="15" height="20" fill="#2a2a2a"/>
<polygon points="4,470 20,462 110,462 122,482 67,532 4,530" fill="#262626"/>
<polygon points="4,496 14,484 26,496 20,520 4,522" fill="#7e7e7e"/>
<polygon points="6,486 12,480 18,488 10,496" fill="#a8a8a8"/>
<polygon points="20,484 34,474 48,488 38,506 22,502" fill="#6a6a6a"/>
<polygon points="40,486 58,468 82,484 72,512 50,518 40,506" fill="#7a7a7a"/>
<polygon points="54,492 64,482 72,494 62,502" fill="#a0a0a0"/>
<polygon points="82,476 96,464 110,476 102,488 86,490" fill="#7c7c7c"/>
<circle cx="99" cy="480" r="3" fill="#c0c0c0"/>
<rect x="10" y="516" width="4" height="14" fill="#3a3a3a"/><rect x="40" y="514" width="4" height="16" fill="#333"/>
<polygon points="4,530 67,534 122,488 128,494 70,546 4,546" fill="#303030"/>
<polygon points="4,546 70,546 128,494 128,504 70,556 4,556" fill="#1c1c1c"/>
<rect x="4" y="556" width="159" height="80" fill="#060606"/>
<rect x="46" y="556" width="22" height="29" fill="#101010" stroke="#303030" stroke-width="2"/>
<path d="M52,566 Q58,560 62,566 L52,580 H63" stroke="#2e2e2e" stroke-width="2" fill="none"/>
<rect x="40" y="586" width="62" height="10" fill="#1e1e1e"/>
<rect x="78" y="607" width="22" height="29" fill="#3c3c3c"/>
<!-- top of cabinet stuff -->
<rect x="167" y="124" width="10" height="45" fill="#383838"/>
<rect x="247" y="124" width="2" height="50" fill="#5a5a5a"/>
<rect x="280" y="124" width="42" height="45" fill="#505050"/>
<rect x="266" y="126" width="14" height="43" fill="#0a0a0a"/>
<path d="M316,124 L297,168" stroke="#141414" stroke-width="4"/>
<path d="M288,130 L296,168" stroke="#2a2a2a" stroke-width="3"/>
<rect x="268" y="125" width="7" height="21" fill="#f0f0f0" rx="3"/>
<circle cx="355" cy="159" r="5.5" fill="#161616"/>
<!-- cabinet -->
<rect x="163" y="169" width="7" height="380" fill="#747474"/>
<rect x="170" y="169" width="96" height="189" fill="#6a6a6a"/>
<rect x="163" y="297" width="103" height="2" fill="#555"/>
<rect x="170" y="299" width="11" height="59" fill="#4e4e4e"/>
<rect x="163" y="357" width="106" height="192" fill="#686868"/>
<rect x="266" y="169" width="2" height="380" fill="#4a4a4a"/>
<rect x="268" y="167" width="101" height="381" fill="#626262"/>
<rect x="356" y="300" width="13" height="248" fill="#5a5a5a"/>
<rect x="209" y="371" width="57" height="48" fill="#030303"/>
<rect x="209" y="464" width="57" height="48" fill="#030303"/>
<circle cx="278" cy="186" r="2" fill="#999"/><circle cx="317" cy="179" r="2" fill="#aaa"/><circle cx="356" cy="191" r="2" fill="#888"/>
<circle cx="175" cy="442" r="2.5" fill="#333"/><circle cx="258" cy="442" r="2.5" fill="#333"/><circle cx="278" cy="477" r="2.5" fill="#333"/><circle cx="359" cy="477" r="2.5" fill="#333"/>
<!-- paper -->
<polygon points="291,302 353,301 356,429 294,432" fill="#d6d6d6"/>
<path d="M310,316 H335 M298,322 H348 M297,349 H328 M297,387 H320 M296,421 H352" stroke="#999" stroke-width="1"/>
<rect x="317" y="327" width="4" height="7" fill="#888"/><rect x="324" y="326" width="4" height="8" fill="#666"/>
<rect x="314" y="338" width="4" height="7" fill="#999"/><rect x="320" y="336" width="5" height="10" fill="#666"/><rect x="328" y="338" width="4" height="7" fill="#999"/>
<rect x="318" y="352" width="5" height="8" fill="#666"/><rect x="326" y="352" width="5" height="8" fill="#777"/>
<rect x="311" y="362" width="6" height="7" fill="#777"/><rect x="330" y="362" width="6" height="6" fill="#aaa"/>
<rect x="315" y="369" width="5" height="7" fill="#666"/><rect x="317" y="376" width="5" height="8" fill="#999"/><rect x="326" y="375" width="5" height="8" fill="#666"/>
<rect x="303" y="391" width="17" height="22" fill="none" stroke="#777" stroke-width="1.2"/>
<rect x="328" y="391" width="15" height="20" fill="none" stroke="#777" stroke-width="1.2"/>
<!-- grille -->
<rect x="284" y="466" width="71" height="73" fill="url(#grill)"/>
<!-- base -->
<rect x="161" y="548" width="215" height="21" fill="#0a0a0a"/>
<rect x="195" y="550" width="91" height="17" fill="#383838"/>
<ellipse cx="177" cy="563" rx="7" ry="3" fill="#777"/>
<rect x="300" y="552" width="30" height="7" fill="#333"/>
<rect x="165" y="569" width="209" height="22" fill="#686868"/>
<rect x="207" y="574" width="125" height="15" fill="#5a5a5a"/>
<rect x="161" y="591" width="215" height="45" fill="#1e1e1e"/>
<rect x="160" y="592" width="18" height="44" fill="#444"/>
<rect x="358" y="592" width="18" height="44" fill="#444"/>
<rect x="235" y="591" width="6" height="45" fill="#080808"/>
<polygon points="280,591 292,591 302,636 290,636" fill="#0c0c0c"/>
<!-- right area -->
<path d="M369,236 Q398,230 398,262" stroke="#1a1a1a" stroke-width="5" fill="none"/>
<rect x="369" y="263" width="108" height="35" fill="#2a2a2a"/>
<rect x="477" y="265" width="39" height="13" fill="#0e0e0e"/>
<path d="M480,300 Q485,280 516,282" stroke="#1a1a1a" stroke-width="3" fill="none"/>
<rect x="369" y="298" width="147" height="32" fill="#7e7e7e"/>
<rect x="369" y="298" width="147" height="4" fill="#1a1a1a"/>
<path d="M377,302 L392,328 M392,302 L377,328 M445,302 L450,330 M458,302 L455,330" stroke="#161616" stroke-width="3"/>
<rect x="369" y="297" width="5" height="340" fill="#505050"/>
<rect x="374" y="330" width="12" height="200" fill="#222"/>
<rect x="386" y="330" width="105" height="200" fill="#1c1c1c"/>
<path d="M470,324 Q510,318 512,345 V530" stroke="#141414" stroke-width="3" fill="none"/>
<polygon points="491,330 516,330 516,530 503,530" fill="#6a6a6a"/><path d="M495,340 L512,520" stroke="#2a2a2a" stroke-width="2"/>
<rect x="424" y="384" width="16" height="25" fill="#6a6a6a"/>
<rect x="387" y="447" width="51" height="67" fill="#505050" rx="3"/>
<rect x="390" y="451" width="45" height="58" fill="#030303"/>
<rect x="470" y="473" width="37" height="44" fill="#4a4a4a" rx="3"/>
<rect x="474" y="477" width="29" height="33" fill="#262626"/>
<rect x="376" y="522" width="140" height="18" fill="#464646"/>
<rect x="386" y="540" width="130" height="16" fill="#444"/>
<rect x="374" y="540" width="12" height="96" fill="#151515"/>
<rect x="386" y="556" width="130" height="80" fill="#222"/>
<rect x="386" y="556" width="8" height="80" fill="#383838"/>
<rect x="435" y="556" width="16" height="80" fill="#0a0a0a"/>
</g>
<!-- red cross -->
<rect x="308" y="365.6" width="31" height="1.6" fill="#ff0000"/>
<rect x="322.5" y="351" width="1.6" height="31" fill="#ff0000"/>
</svg>


<div class="a" style="left:961px;top:75px;width:959px;height:461px;background:#f0f0f0;border-left:1px solid #d9d9d9"></div>
<div class="a" style="left:961px;top:76px;width:955px;height:22px;background:#e9e9e9;border-top:1px solid #c4c4c4"></div>
<div class="ha" style="left:964px;top:79px;width:16px;height:16px;line-height:16px;font-size:8px">HA</div>
<div class="a" style="left:1371px;top:78px;font-size:14.5px;line-height:17px;white-space:nowrap">算子窗口</div>
<div class="a" style="left:1827px;top:87px;width:9px;height:3px;background:#000"></div>
<div class="a" style="left:1853px;top:81px;width:10px;height:9px;border:1px solid #000;border-top-width:2.5px"></div>
<div class="a" style="left:1871px;top:77px;width:45px;height:16px;background:#bababa"></div>
<svg class="a" style="left:1890px;top:82px" width="9" height="8" viewBox="0 0 9 8"><path d="M.5 .5l8 8M8.5 .5l-8 8" stroke="#fff" stroke-width="1.3"/></svg>
<div class="a" style="left:963px;top:98px;width:953px;height:434px;background:#f0f0f0;border-top:1px solid #f7f7f7;border-left:1px solid #f7f7f7;border-bottom:1px solid #dcdcdc;border-right:1px solid #dcdcdc"></div>
<div class="a" style="left:968px;top:103px;font-size:14.5px;line-height:17px;white-space:nowrap">输入算子或函数</div>
<div class="a" style="left:1080px;top:103px;width:831px;height:20px;background:#fff;border-bottom:2px solid #888;border-radius:2px 2px 0 0"></div>
<svg class="a" style="left:1897px;top:109px" width="10" height="6" viewBox="0 0 10 6"><path d="M.5 .5l4.5 4.5 4.5-4.5" stroke="#333" fill="none" stroke-width="1.1"/></svg>
<div class="a" style="left:1916px;top:76px;width:4px;height:460px;background:#f0f0f0"></div>
<div class="a" style="left:1919px;top:76px;width:2px;height:460px;background:#444"></div>
<div class="a" style="left:969px;top:501px;width:181px;height:24px;background:#fafafa;border:1px solid #e6e6e6;border-radius:3px"></div>
<div class="a" style="left:969px;top:504px;width:181px;text-align:center;font-size:14px;line-height:17px;color:#6a6a6a">确定</div>
<div class="a" style="left:1159px;top:501px;width:181px;height:24px;background:#fafafa;border:1px solid #e6e6e6;border-radius:3px"></div>
<div class="a" style="left:1159px;top:504px;width:181px;text-align:center;font-size:14px;line-height:17px;color:#6a6a6a">输入</div>
<div class="a" style="left:1349px;top:501px;width:181px;height:24px;background:#fafafa;border:1px solid #e6e6e6;border-radius:3px"></div>
<div class="a" style="left:1349px;top:504px;width:181px;text-align:center;font-size:14px;line-height:17px;color:#6a6a6a">应用</div>
<div class="a" style="left:1539px;top:501px;width:181px;height:24px;background:#fafafa;border:1px solid #e6e6e6;border-radius:3px"></div>
<div class="a" style="left:1539px;top:504px;width:181px;text-align:center;font-size:14px;line-height:17px;color:#6a6a6a">取消</div>
<div class="a" style="left:1729px;top:501px;width:181px;height:24px;background:#fafafa;border:1px solid #e6e6e6;border-radius:3px"></div>
<div class="a" style="left:1729px;top:504px;width:181px;text-align:center;font-size:14px;line-height:17px;color:#6a6a6a">帮助</div>
<div class="a" style="left:960px;top:536px;width:960px;height:457px;background:#f0f0f0;border:3px solid #f0902a;border-top:none"></div>
<div class="a" style="left:960px;top:536px;width:960px;height:21px;background:#f0902a"></div>
<div class="ha" style="left:964px;top:539px;width:15px;height:15px;line-height:15px;font-size:8px;background:#fbe6cc;color:#f0902a">HA</div>
<div class="a" style="left:1260px;top:537px;font-size:14.5px;line-height:17px;white-space:pre"><span style="display:inline-block;width:72.5px">程序编辑器</span><span class="mono" style="font-size:13.5px"> - main () - </span><span style="display:inline-block;width:43.5px">主线程</span><span class="mono" style="font-size:13.5px">: 35048</span></div>
<div class="a" style="left:1827px;top:546px;width:9px;height:3px;background:#000"></div>
<div class="a" style="left:1853px;top:540px;width:10px;height:9px;border:1px solid #000;border-top-width:2.5px"></div>
<div class="a" style="left:1871px;top:536px;width:45px;height:16px;background:#c9504f"></div>
<svg class="a" style="left:1890px;top:541px" width="9" height="8" viewBox="0 0 9 8"><path d="M.5 .5l8 8M8.5 .5l-8 8" stroke="#000" stroke-width="1.3"/></svg>
<svg class="a" style="left:970px;top:566px" width="16" height="16" viewBox="0 0 16 16"><path d="M0 8l8-7v4h8v6H8v4z" fill="#1a6fc0" stroke="#0a3a70" stroke-width=".6"/></svg>
<svg class="a" style="left:993px;top:566px" width="16" height="16" viewBox="0 0 16 16"><path d="M16 8l-8-7v4H0v6h8v4z" fill="#8a8a8a" stroke="#666" stroke-width=".6"/></svg>
<svg class="a" style="left:1016px;top:566px" width="16" height="16" viewBox="0 0 16 16"><path d="M.5 4.5h15v11h-15z" fill="#fff" stroke="#000"/><path d="M2 8h12M2 10.5h12M2 13h12" stroke="#000" stroke-width=".9"/><rect x="5" y="2.5" width="5" height="3" fill="#f5d080" stroke="#000" stroke-width=".6"/><path d="M13 0v4M11 2h4" stroke="#f5a000" stroke-width="1"/></svg>
<div class="a" style="left:1037px;top:561px;width:753px;height:26px;background:#fbfbfb;border:1px solid #dcdcdc;border-radius:4px"></div>
<svg class="a" style="left:1043px;top:566px" width="16" height="16" viewBox="0 0 16 16"><path d="M3.5 .5h12v15h-12z" fill="#fff" stroke="#000" stroke-width="1.5"/><path d="M7 4h6M8 7h5M7 11h6" stroke="#000"/><path d="M0 8l4-4v2.5h4v3H4V12z" fill="#3cb01a"/></svg>
<div class="a mono" style="left:1064px;top:566px;font-size:13.4px;line-height:17px;white-space:pre">main (:::)</div>
<svg class="a" style="left:1776px;top:572px" width="9" height="5" viewBox="0 0 9 5"><path d="M0 0h9l-4.5 5z" fill="#000"/></svg>
<svg class="a" style="left:1793px;top:565px" width="16" height="16" viewBox="0 0 16 16"><path d="M.5 .5h9l2 2v10h-11z" fill="#eee" stroke="#555"/><path d="M4.5 6.5h11v9h-11z" fill="#fff" stroke="#000" stroke-width="1.2"/><path d="M6 9h2M9 9h2M12 9h2M6 12h2M9 12h2M12 12h2" stroke="#000"/><path d="M11 2h4v3" stroke="#1a3fe0" stroke-width="1.3" fill="none"/></svg>
<div class="a" style="left:1817px;top:563px;width:22px;height:21px;background:#cce4f7;border:1px solid #99c9ef;border-radius:3px"></div>
<div class="a" style="left:1840px;top:563px;width:22px;height:21px;background:#cce4f7;border:1px solid #99c9ef;border-radius:3px"></div>
<div class="a" style="left:1863px;top:563px;width:22px;height:21px;background:#cce4f7;border:1px solid #99c9ef;border-radius:3px"></div>
<svg class="a" style="left:1820px;top:566px" width="16" height="16" viewBox="0 0 16 16"><path d="M.5 1.5h10v13h-10z" fill="#eee" stroke="#555"/><path d="M2 4h6M2 7h6M2 10h4" stroke="#555"/><path d="M4 12l8-10 2 2-8 9z" fill="#1a3fe0" stroke="#000" stroke-width=".5"/><path d="M8 12l3 3 5-6" stroke="#2ca82c" stroke-width="2" fill="none"/></svg>
<svg class="a" style="left:1843px;top:566px" width="16" height="16" viewBox="0 0 16 16"><path d="M5 .5h2v9H5z" fill="#000"/><path d="M8 1l5 4-5 4z" fill="#1a6fc0"/><path d="M12 8v4H3" stroke="#000" stroke-width="1.6" fill="none"/><path d="M1 12l4-3v6z" fill="#1a3a70"/><path d="M8 12l3 3 5-6" stroke="#2ca82c" stroke-width="2" fill="none"/></svg>
<svg class="a" style="left:1866px;top:566px" width="16" height="16" viewBox="0 0 16 16"><path d="M.5 1.5h10v13h-10z" fill="#eee" stroke="#555"/><path d="M2 4h6M2 7h6" stroke="#555"/><path d="M4 9l8-8 2 2-8 8z" fill="#1a3fe0" stroke="#000" stroke-width=".5"/><rect x="3" y="9.5" width="8" height="5" fill="#f5e040" stroke="#000" stroke-width=".7"/><path d="M8 12l3 3 5-6" stroke="#2ca82c" stroke-width="2" fill="none"/></svg>
<svg class="a" style="left:1889px;top:566px" width="16" height="16" viewBox="0 0 16 16"><path d="M.5 5.5h8v9h-8z" fill="#eee" stroke="#555"/><path d="M3 12l8-8" stroke="#1a3fe0" stroke-width="2"/><path d="M8 3l4-3 4 4-3 4z" fill="#f5e040" stroke="#000" stroke-width=".7"/><path d="M10 9l5 6M15 9l-5 6" stroke="#e02020" stroke-width="2"/></svg>
<div class="a" style="left:967px;top:591px;width:947px;height:395px;background:#fafafa;border:1px solid #8e96a0"></div>
<div class="a" style="left:968px;top:592px;width:40px;height:393px;background:#fafafa"></div>
<div class="a" style="left:1008px;top:592px;width:1px;height:393px;background:#9a9a9a"></div>
<div class="a" style="left:1892px;top:592px;width:21px;height:393px;background:#f0f0f0"></div>
<div class="a" style="left:1899px;top:757px;width:6px;height:208px;background:#858585"></div>
<div class="a" style="left:1011px;top:696px;width:881px;height:20px;background:#fcf1e7"></div>
<div class="a mono ln" style="top:597.00px">14</div>
<div class="a mono code" style="top:597.00px;color:#00a000">*<span class="cj" style="width:68px">显示图像</span></div>
<div class="a mono ln" style="top:617.65px">15</div>
<div class="a mono code" style="top:617.65px;color:#7a4a00">dev_display(Image)</div>
<div class="a mono ln" style="top:638.30px">16</div>
<div class="a mono ln" style="top:658.95px">17</div>
<div class="a mono code" style="top:658.95px;color:#00a000">* <span class="cj" style="width:136px">限制灰度值范围：</span>128-<span class="cj" style="width:85px">最小灰度值</span> 255-<span class="cj" style="width:85px">最大灰度值</span></div>
<div class="a mono ln" style="top:679.60px">18</div>
<div class="a mono code" style="top:679.60px;color:#00008b">threshold (Image, Region, 128, 255)</div>
<div class="a mono ln" style="top:700.25px">19</div>
<div class="a mono ln" style="top:720.90px">20</div>
<div class="a mono code" style="top:720.90px;color:#00a000">* <span class="cj" style="width:204px">连通域搜索：寻找闭合图像</span></div>
<div class="a mono ln" style="top:741.55px">21</div>
<div class="a mono code" style="top:741.55px;color:#00008b">connection (Region, ConnectedRegions)</div>
<div class="a mono ln" style="top:762.20px">22</div>
<div class="a mono ln" style="top:782.85px">23</div>
<div class="a mono code" style="top:782.85px;color:#00a000">* <span class="cj" style="width:85px">选择形状：</span> <span class="cj" style="width:85px">面积范围：</span> <span class="cj" style="width:34px">最小</span> <span class="cj" style="width:34px">最大</span></div>
<div class="a mono ln" style="top:803.50px">24</div>
<div class="a mono code" style="top:803.50px;color:#00008b">select_shape (ConnectedRegions, SelectedRegions, &#39;area&#39;, &#39;and&#39;, 8144, 8500)</div>
<div class="a mono ln" style="top:824.15px">25</div>
<div class="a mono ln" style="top:844.80px">26</div>
<div class="a mono code" style="top:844.80px;color:#00a000">*<span class="cj" style="width:102px">获取面积中心</span></div>
<div class="a mono ln" style="top:865.45px">27</div>
<div class="a mono code" style="top:865.45px;color:#00008b">area_center(SelectedRegions, Area, Row, Column)</div>
<div class="a mono ln" style="top:886.10px">28</div>
<div class="a mono ln" style="top:906.75px">29</div>
<div class="a mono code" style="top:906.75px;color:#00a000">*<span class="cj" style="width:85px">生成十字星</span></div>
<div class="a mono ln" style="top:927.40px">30</div>
<div class="a mono code" style="top:927.40px;color:#00008b">gen_cross_contour_xld (Cross, Row, Column, 30, 0.0)</div>
<div class="a mono ln" style="top:948.05px">31</div>
<svg class="a" style="left:982px;top:964px" width="13" height="11" viewBox="0 0 13 11"><path d="M0 4h7V0l6 5.5-6 5.5V7H0z" fill="#5ab02a"/></svg>
<svg class="a" style="left:1001px;top:692px" width="6" height="6" viewBox="0 0 6 6"><path d="M0 0l6 3-6 3z" fill="#000"/></svg>
<div class="a" style="left:0px;top:993px;width:1921px;height:27px;background:#f0f0f0;border-top:1px solid #e0e0e0"></div>
<svg class="a" style="left:3px;top:999px" width="16" height="16" viewBox="0 0 16 16"><path d="M2 4l4-3M1 9l8-6M3 14l10-9M8 15l6-6M12 15l3-3" stroke="#a8a8a8" stroke-width="1.6"/><path d="M5 6l3 3M9 8l3 3" stroke="#888" stroke-width="1"/></svg>
<div class="a" style="left:21px;top:996px;width:1px;height:22px;background:#d8d8d8"></div>
<div class="a mono" style="left:29px;top:1001px;font-size:13.4px;line-height:16px;white-space:pre">gen_cross_contour_xld (0.0 ms)</div>
<div class="a" style="left:1326px;top:996px;width:1px;height:22px;background:#d8d8d8"></div>
<div class="a" style="left:1333px;top:1007px;width:8px;height:1px;background:#000"></div>
<div class="a" style="left:1703px;top:996px;width:1px;height:22px;background:#d8d8d8"></div>
<div class="a" style="left:1709px;top:999px;width:7px;height:16px;background:linear-gradient(#f5b030,#1a3a70);border:1px solid #000"></div>
<div class="a" style="left:1723px;top:1007px;width:8px;height:1px;background:#000"></div>
<div class="a" style="left:1815px;top:996px;width:1px;height:22px;background:#d8d8d8"></div>
<svg class="a" style="left:1820px;top:999px" width="16" height="16" viewBox="0 0 16 16"><path d="M4 1v14M1 4h3M1 12h3M4 4h8l-2-2M4 12h8" stroke="#1a3a70" stroke-width="1.3" fill="none"/><text x="9" y="16" font-size="6" font-family="Liberation Sans">R</text><text x="12" y="9" font-size="6" font-family="Liberation Sans">C</text></svg>
<div class="a mono" style="left:1838px;top:1000px;font-size:13px;line-height:16px;white-space:pre">28,  431</div>
<div class="a" style="left:0px;top:1020px;width:1921px;height:1px;background:#2a3440"></div>
<div class="a" style="left:1920px;top:0px;width:1px;height:1021px;background:#3a3a3a"></div>

</body></html>
